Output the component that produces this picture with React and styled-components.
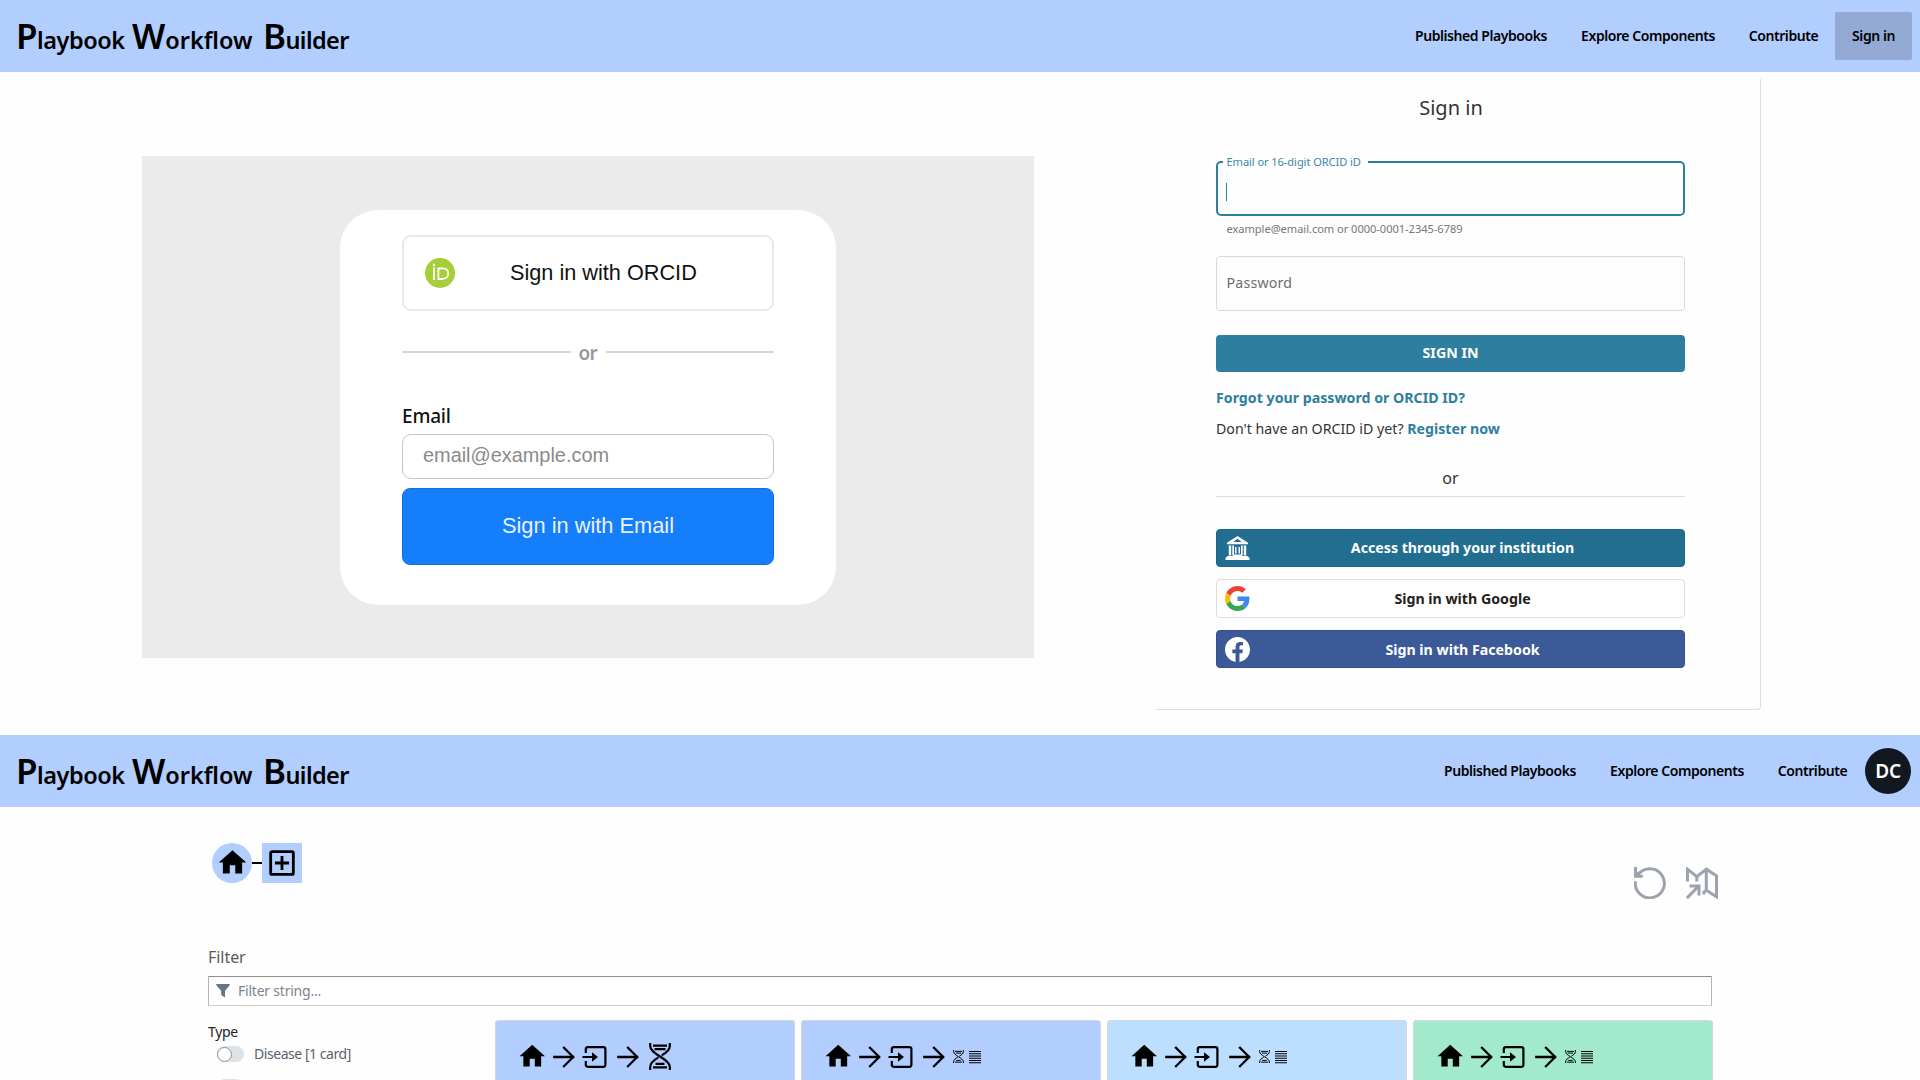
import React from "react";
import styled, { createGlobalStyle } from "styled-components";

const Global = createGlobalStyle`
  * { box-sizing: border-box; }
  body {
    margin: 0;
    background: #fff;
    overflow: hidden;
    font-family: "Noto Sans", "Open Sans", sans-serif;
    color: #000;
  }
`;

const Page = styled.div`
  width: 1920px;
  height: 1080px;
  overflow: hidden;
  display: flex;
  flex-direction: column;
  background: #fefefe;
`;

/* ---------- header ---------- */

const Header = styled.header`
  height: 72px;
  flex: none;
  background: #b1ceff;
  display: flex;
  align-items: center;
  justify-content: space-between;
  padding: 0 ${(p) => p.$right}px 0 16px;
`;

const Title = styled.h1`
  margin: 0;
  padding-top: 3px;
  display: flex;
  align-items: baseline;
  line-height: 48px;
  font-weight: 600;
`;

const TitleWord = styled.span`
  display: inline-block;
  width: ${(p) => p.$w}px;
  white-space: nowrap;
  font-size: 23.5px;
  letter-spacing: ${(p) => p.$ls}px;
  &::first-letter { font-size: 35px; }
`;

const Nav = styled.nav`
  display: flex;
  align-items: center;
`;

const NavLink = styled.a`
  height: 48px;
  width: ${(p) => p.$w}px;
  padding-bottom: 2px;
  display: flex;
  align-items: center;
  justify-content: center;
  font-size: 14px;
  font-weight: 600;
  letter-spacing: -0.44px;
  white-space: nowrap;
  border-radius: 2px;
  background: ${(p) => (p.$active ? "#93aad4" : "transparent")};
`;

const Avatar = styled.div`
  width: 46px;
  height: 46px;
  margin-left: 1px;
  border-radius: 50%;
  background: #131720;
  color: #fff;
  display: flex;
  align-items: center;
  justify-content: center;
  font-size: 19px;
  font-weight: 600;
  letter-spacing: -0.3px;
`;

/* ---------- sign-in section ---------- */

const SignInArea = styled.main`
  height: 663px;
  flex: none;
  display: flex;
  align-items: flex-start;
  padding-left: 142px;
`;

const GrayPanel = styled.section`
  width: 892px;
  height: 502px;
  margin-top: 84px;
  background: #ebebeb;
  display: flex;
  justify-content: center;
  align-items: flex-start;
`;

const LoginCard = styled.div`
  width: 496px;
  height: 395px;
  margin-top: 54px;
  padding: 25px 62px 0;
  border-radius: 38px;
  background: #fff;
  display: flex;
  flex-direction: column;
  font-family: "Liberation Sans", Arial, sans-serif;
`;

const OrcidButton = styled.button`
  height: 76px;
  width: 372px;
  flex: none;
  display: flex;
  align-items: center;
  padding: 0 0 0 21px;
  border: 2px solid #e9e9e9;
  border-radius: 9px;
  background: #fff;
  font: 21.7px "Liberation Sans", Arial, sans-serif;
  color: #111;
`;

const OrcidLabel = styled.span`
  margin-left: 55px;
  padding-bottom: 1px;
  white-space: nowrap;
`;

const OrRow = styled.div`
  margin-top: 29px;
  height: 24px;
  display: flex;
  align-items: center;
  gap: 8px;
  font: 600 19px "Noto Sans", sans-serif;
  line-height: 24px;
  color: #999;
`;

const OrWord = styled.span`
  width: 19px;
  letter-spacing: -0.8px;
  padding-top: 2px;
`;

const Rule = styled.span`
  height: 1.5px;
  flex: 1;
  background: #d6d6d6;
`;

const EmailLabel = styled.label`
  margin-top: 37px;
  height: 30px;
  font: 500 19px/30px "Noto Sans", sans-serif;
  letter-spacing: -0.2px;
  color: #111;
`;

const EmailInput = styled.div`
  margin-top: 3px;
  height: 45px;
  flex: none;
  border: 1.5px solid #c6c6c6;
  border-radius: 9px;
  padding: 0 0 2px 20px;
  display: flex;
  align-items: center;
  font-size: 19.9px;
  color: #8a8a8a;
`;

const EmailButton = styled.button`
  margin-top: 9px;
  height: 77px;
  flex: none;
  border: 1px solid #146fe0;
  border-radius: 8px;
  background: #157efb;
  color: #e9f2ff;
  font: 21.8px "Liberation Sans", Arial, sans-serif;
  padding: 0 0 1px;
`;

const OrcidPanel = styled.section`
  margin: 7px 0 0 122px;
  width: 605px;
  height: 631px;
  border-right: 1.5px solid #dedede;
  border-bottom: 1.5px solid #dedede;
  border-bottom-right-radius: 4px;
  padding: 0 74px 0 60px;
  display: flex;
  flex-direction: column;
  font-size: 14.2px;
  color: #333;
`;

const PanelTitle = styled.h2`
  margin: 15px 0 0;
  height: 28px;
  line-height: 28px;
  font-size: 20px;
  font-weight: 400;
  text-align: center;
`;

const ActiveField = styled.fieldset`
  margin: 33px 0 0;
  width: 469px;
  height: 61px;
  border: 2px solid #2e7f9f;
  border-radius: 5px;
  padding: 0 0 0 8px;
  min-inline-size: 0;
`;

const Legend = styled.legend`
  margin-left: -3px;
  padding: 0 7px 0 3.5px;
  width: 145px;
  height: 14px;
  line-height: 14px;
  font-size: 11.1px;
  letter-spacing: -0.08px;
  white-space: nowrap;
  color: #3b87a5;
`;

const Caret = styled.span`
  display: block;
  margin: 14px 0 0;
  width: 1.4px;
  height: 18px;
  background: #2e7f9f;
`;

const Hint = styled.p`
  margin: 5px 0 0 10.5px;
  height: 16px;
  line-height: 16px;
  font-size: 11.1px;
  letter-spacing: -0.04px;
  color: #777;
`;

const PasswordField = styled.div`
  margin-top: 19px;
  width: 469px;
  height: 54.5px;
  flex: none;
  border: 1px solid #d9d9d9;
  border-radius: 4px;
  padding: 0 0 1px 9.5px;
  display: flex;
  align-items: center;
  letter-spacing: 0.2px;
  color: #6e6e6e;
`;

const PrimaryButton = styled.button`
  margin-top: 24.5px;
  width: 469px;
  height: 36.5px;
  flex: none;
  border: 0;
  border-radius: 4px;
  background: #2e7f9f;
  color: #fff;
  padding: 0 0 1px;
  font: 700 14.2px "Noto Sans", sans-serif;
`;

const TextLine = styled.p`
  margin: ${(p) => p.$top}px 0 0;
  height: 20px;
  line-height: 20px;
  white-space: nowrap;
`;

const Link = styled.a`
  font-weight: 700;
  color: #2e7f9f;
`;

const Divider = styled.div`
  margin-top: 28px;
  width: 469px;
  height: 30px;
  border-bottom: 1.3px solid #dcdcdc;
  line-height: 22px;
  font-size: 16px;
  text-align: center;
`;

const Providers = styled.div`
  margin-top: 32px;
  display: flex;
  flex-direction: column;
  gap: 12.5px;
`;

const Provider = styled.button`
  width: 469px;
  height: 38.3px;
  display: flex;
  align-items: center;
  padding: 0 9px 0 8px;
  border: 1px solid ${(p) => p.$border};
  border-radius: 4px;
  background: ${(p) => p.$bg};
  color: ${(p) => p.$fg};
  font: 700 14.2px "Noto Sans", sans-serif;
`;

const ProviderLabel = styled.span`
  flex: 1;
  text-align: center;
`;

/* ---------- workflow section ---------- */

const Workflow = styled.main`
  flex: 1;
  padding: 36px 208px 0;
  display: flex;
  flex-direction: column;
  overflow: hidden;
`;

const TopRow = styled.div`
  height: 56px;
  flex: none;
  display: flex;
  justify-content: space-between;
  padding: 0 0 0 4px;
  margin-right: -6px;
`;

const Crumbs = styled.div`
  display: flex;
  align-items: center;
  height: 40px;
`;

const Crumb = styled.div`
  width: 40px;
  height: 40px;
  border-radius: ${(p) => (p.$round ? "50%" : "0")};
  background: #b1ceff;
  display: flex;
  align-items: center;
  justify-content: center;
  padding-bottom: ${(p) => (p.$round ? 1 : 0)}px;
`;

const Connector = styled.span`
  width: 10px;
  height: 2px;
  background: #000;
`;

const Tools = styled.div`
  display: flex;
  align-items: flex-end;
  gap: 20px;
  color: #9ca3af;
`;

const FilterLabel = styled.div`
  margin-top: 46px;
  height: 24px;
  flex: none;
  line-height: 24px;
  font-size: 16px;
  letter-spacing: -0.05px;
  color: #555b66;
`;

const FilterInput = styled.div`
  margin-top: 7px;
  height: 30px;
  flex: none;
  display: flex;
  align-items: center;
  gap: 8px;
  padding: 0 0 1px 7px;
  border: 1px solid #b4b4b4;
  border-top: 1.6px solid #8f8f8f;
  border-bottom-color: #cdcdcd;
  border-radius: 1px;
  background: #fff;
  font-size: 14px;
  letter-spacing: -0.22px;
  color: #7b8390;
`;

const Body = styled.div`
  margin-top: 14px;
  display: flex;
  align-items: flex-start;
`;

const Sidebar = styled.aside`
  width: 287px;
  flex: none;
  font-size: 14px;
  color: #5b616c;
`;

const SideTitle = styled.div`
  margin-top: 2px;
  height: 20px;
  line-height: 20px;
  letter-spacing: -0.3px;
  color: #222;
`;

const ToggleRow = styled.div`
  margin: 0 0 0 8.5px;
  height: 33px;
  padding-top: 4px;
  display: flex;
  align-items: flex-start;
  gap: 10px;
  line-height: 16px;
  letter-spacing: -0.45px;
`;

const Switch = styled.span`
  width: 27.5px;
  height: 16px;
  border-radius: 8px;
  background: #dfe2e7;
  display: flex;
  align-items: center;
`;

const Knob = styled.span`
  width: 15px;
  height: 15px;
  border-radius: 50%;
  border: 1px solid #8b8f96;
  background: #fff;
`;

const Cards = styled.div`
  display: flex;
  gap: 6px;
`;

const Card = styled.article`
  width: 300px;
  height: 120px;
  flex: none;
  border: 1px solid #d3d6da;
  border-radius: 3px;
  background: ${(p) => p.$bg};
  padding: 20px 0 0 20.5px;
`;

const Chain = styled.div`
  display: flex;
  align-items: center;
  height: 31px;
`;

const Step = styled.span`
  display: flex;
  margin-left: ${(p) => p.$gap || 0}px;
`;

/* ---------- icons ---------- */

const HomeIcon = ({ size }) => (
  <svg width={size} height={size} viewBox="0 0 24 24" fill="#000">
    <path d="M10 20v-6h4v6h5v-8h3L12 3 2 12h3v8z" />
  </svg>
);

const PlusBoxIcon = () => (
  <svg width="34" height="34" viewBox="0 0 24 24" fill="#000">
    <path d="M19 19V5H5v14h14m0-16a2 2 0 0 1 2 2v14a2 2 0 0 1-2 2H5a2 2 0 0 1-2-2V5c0-1.11.9-2 2-2h14m-8 4h2v4h4v2h-4v4h-2v-4H7v-2h4V7z" />
  </svg>
);

const ArrowIcon = () => (
  <svg width="22" height="22" viewBox="0 0 22 22" fill="none" stroke="#000" strokeWidth="2.3" strokeLinecap="square">
    <path d="M1.3 11H20M11 1.8 20.2 11 11 20.2" />
  </svg>
);

const InputIcon = () => (
  <svg width="25" height="22" viewBox="0 0 25 22">
    <path d="M3.8 7V3.2Q3.8 1.2 5.8 1.2H21.4Q23.4 1.2 23.4 3.2V18.8Q23.4 20.8 21.4 20.8H5.8Q3.8 20.8 3.8 18.8V15" fill="none" stroke="#000" strokeWidth="2.2" />
    <path d="M.5 10H10V6.2L16 11 10 15.8V12H.5z" fill="#000" />
  </svg>
);

const DnaIcon = ({ width, height, stroke }) => (
  <svg width={width} height={height} viewBox="0 0 22 27" fill="none" stroke="#000" strokeWidth={stroke}>
    <path d="M1.2 0V3C1.2 12 20.8 15 20.8 24V27M20.8 0V3C20.8 7.500 16.500 10.300 12.600 12.400M9.400 14.400C5.500 16.700 1.200 19.500 1.200 24V27" />
    <path d="M4 2.700H18M5.500 6.200H16.500M6.500 20.800H15.500M4 24.300H18" />
  </svg>
);

const LinesIcon = () => (
  <svg width="12" height="14" viewBox="0 0 12 14" stroke="#000" strokeWidth="1.05">
    <path d="M0 1.400H12M0 3.650H12M0 5.900H12M0 8.150H12M0 10.400H12M0 12.650H12" />
  </svg>
);

const UndoIcon = () => (
  <svg width="32" height="32" viewBox="0 0 32 32" fill="none" stroke="currentColor" strokeWidth="3">
    <path d="M1.500 14.200A14.500 14.500 0 1 0 3.400 8.900" />
    <path d="M1.500 0V10.500M0 9.200H8.800M1.400 9.200 5.400 5.200" />
  </svg>
);

const MapIcon = () => (
  <svg width="32" height="32" viewBox="0 0 32 32" fill="none" stroke="currentColor" strokeWidth="3">
    <path d="M1.500 14.500V2.200L10.800 9.600 20.300 2.200 30.500 8.800V29.800L20.300 23.200V2.200M10.800 9.600V14.500M20.300 23.200 17.900 25V27.500" />
    <path d="M.9 31.100 12.500 19.200M3.500 19H13V28.500" />
  </svg>
);

const FunnelIcon = () => (
  <svg width="14" height="14" viewBox="0 0 14 14" fill="#64748b">
    <path d="M.4 0H13.600Q14 .9 13.500 1.500L9 6.800V13.500L5.200 11V6.800L.5 1.500Q0 .9.4 0z" />
  </svg>
);

const OrcidIcon = () => (
  <svg width="30" height="30" viewBox="0 0 30 30">
    <circle cx="15" cy="15" r="15" fill="#a6ce39" />
    <circle cx="9" cy="7" r="1.250" fill="#fff" />
    <path d="M9 9.500V22M13.400 10.400V21H17.200C21.200 21 23.300 18.600 23.300 15.700 23.300 12.600 21 10.400 17.200 10.400z" fill="none" stroke="#fff" strokeWidth="1.800" />
  </svg>
);

const InstitutionIcon = () => (
  <svg width="25" height="24" viewBox="0 0 25 24" fill="#fff">
    <path fillRule="evenodd" d="M12.500 0 23 6.700V8.300H2V6.700zM12.500 2.800 8.300 5.900H16.700z" />
    <path d="M3.800 9.400H6.200V19.500H3.800zM7.300 9.400H9V19.500H7.300zM16 9.400H17.700V19.500H16zM18.800 9.400H21.200V19.500H18.800zM10 11H11.500V17.500H10zM13.500 11H15V17.500H13.500zM2.500 20H22.500L24.500 22V24H.5V22z" />
    <path d="M8.500 18.500H16.500V20H8.500z" />
  </svg>
);

const GoogleIcon = () => (
  <svg width="25" height="25" viewBox="0 0 48 48">
    <path fill="#EA4335" d="M24 9.500c3.540 0 6.710 1.220 9.210 3.600l6.850-6.850C35.900 2.380 30.470 0 24 0 14.620 0 6.510 5.380 2.560 13.220l7.980 6.190C12.430 13.720 17.740 9.500 24 9.500z" />
    <path fill="#4285F4" d="M46.980 24.550c0-1.570-.15-3.090-.38-4.550H24v9.020h12.940c-.58 2.960-2.260 5.480-4.780 7.180l7.730 6c4.510-4.180 7.090-10.360 7.090-17.650z" />
    <path fill="#FBBC05" d="M10.530 28.590c-.48-1.450-.76-2.990-.76-4.590s.27-3.140.76-4.590l-7.980-6.190C.92 16.460 0 20.120 0 24c0 3.880.92 7.540 2.560 10.780l7.970-6.190z" />
    <path fill="#34A853" d="M24 48c6.480 0 11.930-2.130 15.890-5.810l-7.730-6c-2.150 1.450-4.920 2.300-8.160 2.300-6.260 0-11.570-4.220-13.470-9.910l-7.980 6.190C6.510 42.620 14.620 48 24 48z" />
  </svg>
);

const FacebookIcon = () => (
  <svg width="25" height="25" viewBox="0 0 24 24" fill="#fff">
    <path d="M24 12.073c0-6.627-5.373-12-12-12s-12 5.373-12 12c0 5.990 4.388 10.954 10.125 11.854v-8.385H7.078v-3.470h3.047V9.430c0-3.007 1.792-4.669 4.533-4.669 1.312 0 2.686.235 2.686.235v2.953H15.830c-1.491 0-1.956.925-1.956 1.874v2.250h3.328l-.532 3.470h-2.796v8.385C19.612 23.027 24 18.062 24 12.073z" />
  </svg>
);

/* ---------- parts ---------- */

const Brand = () => (
  <Title>
    <TitleWord $w={116} $ls={-0.45}>Playbook</TitleWord>
    <TitleWord $w={131} $ls={-0.05}>Workflow</TitleWord>
    <TitleWord $w={90} $ls={-0.6}>Builder</TitleWord>
  </Title>
);

const NavLinks = () => (
  <>
    <NavLink $w={166}>Published Playbooks</NavLink>
    <NavLink $w={168}>Explore Components</NavLink>
    <NavLink $w={103}>Contribute</NavLink>
  </>
);

const ComponentCard = ({ bg, large }) => (
  <Card $bg={bg}>
    <Chain>
      <Step><HomeIcon size={30.5} /></Step>
      <Step $gap={6}><ArrowIcon /></Step>
      <Step $gap={7}><InputIcon /></Step>
      <Step $gap={10}><ArrowIcon /></Step>
      {large ? (
        <Step $gap={10}><DnaIcon width={22} height={27} stroke={2.2} /></Step>
      ) : (
        <>
          <Step $gap={8}><DnaIcon width={11} height={13.5} stroke={2} /></Step>
          <Step $gap={4.5}><LinesIcon /></Step>
        </>
      )}
    </Chain>
  </Card>
);

export default function App() {
  return (
    <Page>
      <Global />
      <Header $right={8}>
        <Brand />
        <Nav>
          <NavLinks />
          <NavLink $w={77} $active>Sign in</NavLink>
        </Nav>
      </Header>

      <SignInArea>
        <GrayPanel>
          <LoginCard>
            <OrcidButton>
              <OrcidIcon />
              <OrcidLabel>Sign in with ORCID</OrcidLabel>
            </OrcidButton>
            <OrRow>
              <Rule />
              <OrWord>or</OrWord>
              <Rule />
            </OrRow>
            <EmailLabel>Email</EmailLabel>
            <EmailInput>email@example.com</EmailInput>
            <EmailButton>Sign in with Email</EmailButton>
          </LoginCard>
        </GrayPanel>

        <OrcidPanel>
          <PanelTitle>Sign in</PanelTitle>
          <ActiveField>
            <Legend>Email or 16-digit ORCID iD</Legend>
            <Caret />
          </ActiveField>
          <Hint>example@email.com or 0000-0001-2345-6789</Hint>
          <PasswordField>Password</PasswordField>
          <PrimaryButton>SIGN IN</PrimaryButton>
          <TextLine $top={16}><Link>Forgot your password or ORCID ID?</Link></TextLine>
          <TextLine $top={11}>Don't have an ORCID iD yet? <Link>Register now</Link></TextLine>
          <Divider>or</Divider>
          <Providers>
            <Provider $bg="#226e91" $border="#1d6486" $fg="#fff">
              <InstitutionIcon />
              <ProviderLabel>Access through your institution</ProviderLabel>
            </Provider>
            <Provider $bg="#fff" $border="#dedede" $fg="#222">
              <GoogleIcon />
              <ProviderLabel>Sign in with Google</ProviderLabel>
            </Provider>
            <Provider $bg="#3c5998" $border="#34508e" $fg="#fff">
              <FacebookIcon />
              <ProviderLabel>Sign in with Facebook</ProviderLabel>
            </Provider>
          </Providers>
        </OrcidPanel>
      </SignInArea>

      <Header $right={9}>
        <Brand />
        <Nav>
          <NavLinks />
          <Avatar>DC</Avatar>
        </Nav>
      </Header>

      <Workflow>
        <TopRow>
          <Crumbs>
            <Crumb $round><HomeIcon size={33} /></Crumb>
            <Connector />
            <Crumb><PlusBoxIcon /></Crumb>
          </Crumbs>
          <Tools>
            <UndoIcon />
            <MapIcon />
          </Tools>
        </TopRow>
        <FilterLabel>Filter</FilterLabel>
        <FilterInput>
          <FunnelIcon />
          Filter string...
        </FilterInput>
        <Body>
          <Sidebar>
            <SideTitle>Type</SideTitle>
            <ToggleRow>
              <Switch><Knob /></Switch>
              Disease [1 card]
            </ToggleRow>
            <ToggleRow>
              <Switch><Knob /></Switch>
            </ToggleRow>
          </Sidebar>
          <Cards>
            <ComponentCard bg="#b1ceff" large />
            <ComponentCard bg="#b1ceff" />
            <ComponentCard bg="#bcdfff" />
            <ComponentCard bg="#a2e9cd" />
          </Cards>
        </Body>
      </Workflow>
    </Page>
  );
}
